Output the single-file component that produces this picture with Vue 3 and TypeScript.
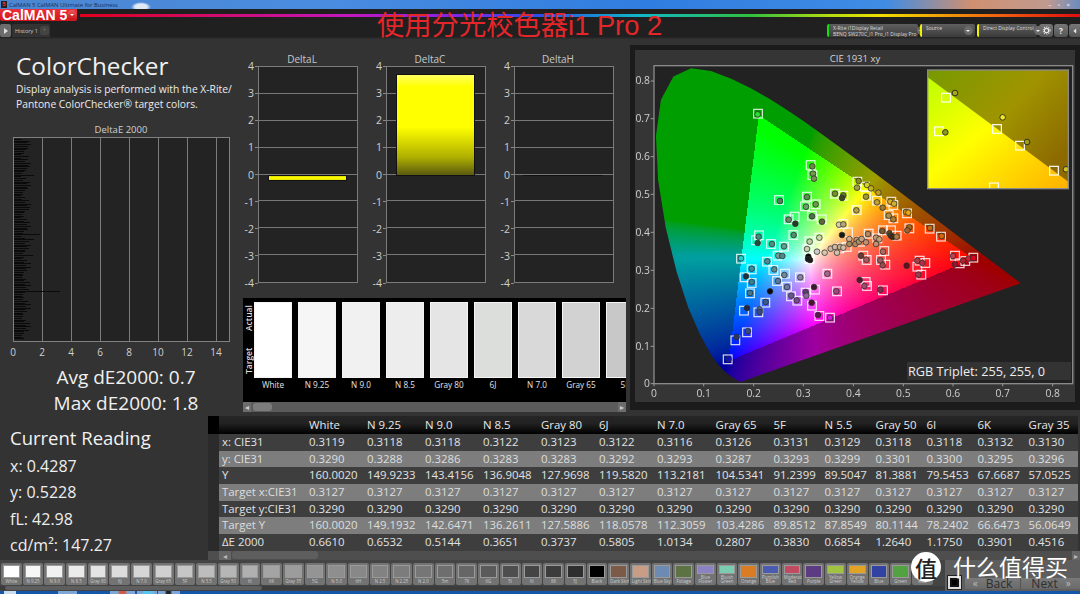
<script setup lang="ts">
import { onMounted, ref } from 'vue'

const canvasEl = ref<HTMLCanvasElement | null>(null)

const locus: number[][] = [[.1741,.005],[.1714,.0051],[.1644,.0109],[.1566,.0177],[.144,.0297],[.1241,.0578],[.1096,.0868],[.0913,.1327],[.0687,.2007],[.0454,.295],[.0235,.4127],[.0082,.5384],[.0039,.6548],[.0139,.7502],[.0389,.812],[.0743,.8338],[.1142,.8262],[.1547,.8059],[.1929,.7816],[.2296,.7543],[.2658,.7243],[.3016,.6923],[.3373,.6589],[.3731,.6245],[.4087,.5896],[.4441,.5547],[.4788,.5202],[.5125,.4866],[.5448,.4544],[.5752,.4242],[.6029,.3965],[.627,.3725],[.6658,.334],[.6915,.3083],[.7079,.292],[.726,.274],[.7347,.2653]]

const toPx = (x: number, y: number) => [(72 + x * 1497.5) / 3, (1016 - y * 1135) / 3]
const fromPx = (px: number, py: number) => [(px * 3 - 72) / 1497.5, (1016 - py * 3) / 1135]

function inTriangle(x: number, y: number) {
  const t = [[.21, .71], [.64, .33], [.15, .06]]
  let sign = 0
  for (let i = 0; i < 3; i++) {
    const a = t[i], b = t[(i + 1) % 3]
    const c = (b[0] - a[0]) * (y - a[1]) - (b[1] - a[1]) * (x - a[0])
    if (c !== 0) {
      if (sign !== 0 && Math.sign(c) !== sign) return false
      sign = Math.sign(c)
    }
  }
  return true
}

function colorAt(x: number, y: number): number[] {
  const Y = 1, X = x / Math.max(y, 0.001), Z = (1 - x - y) / Math.max(y, 0.001)
  let r = 3.2406 * X - 1.5372 * Y - 0.4986 * Z
  let g = -0.9689 * X + 1.8758 * Y + 0.0415 * Z
  let b = 0.0557 * X - 0.204 * Y + 1.057 * Z
  r = Math.max(r, 0); g = Math.max(g, 0); b = Math.max(b, 0)
  const inside = inTriangle(x, y)
  if (!inside && g >= b && g > 0) {
    const t = Math.min(Math.max((b / g - 0.6) / 0.35, 0), 1)
    b = g * t
  }
  const m = Math.max(r, g, b, 0.0001)
  const k = inside ? 1 : 0.62
  const e = inside ? 0.85 : 0.6
  const f = (v: number) => Math.pow(v / m, e) * 255 * k
  return [f(r), f(g), f(b)]
}

onMounted(() => {
  const c = canvasEl.value
  if (!c) return
  const ctx = c.getContext('2d')
  if (!ctx) return
  const off = document.createElement('canvas')
  off.width = 450; off.height = 365
  const oc = off.getContext('2d')
  if (!oc) return
  const img = oc.createImageData(450, 365)
  for (let py = 0; py < 365; py++) {
    for (let px = 0; px < 450; px++) {
      const [x, y] = fromPx(px + 0.5, py + 0.5)
      const col = y > 0 ? colorAt(x, y) : [0, 0, 0]
      const i = (py * 450 + px) * 4
      img.data[i] = col[0]; img.data[i + 1] = col[1]; img.data[i + 2] = col[2]; img.data[i + 3] = 255
    }
  }
  oc.putImageData(img, 0, 0)
  ctx.fillStyle = '#222222'
  ctx.fillRect(24, 21, 419, 318)
  ctx.save()
  ctx.beginPath()
  locus.forEach((p, i) => {
    const [a, b] = toPx(p[0], p[1])
    if (i) ctx.lineTo(a, b)
    else ctx.moveTo(a, b)
  })
  ctx.closePath()
  ctx.clip()
  ctx.drawImage(off, 0, 0)
  ctx.restore()
})

const barValues = Array.from({ length: 118 }, (_, i) => {
  if (i === 89) return 3.15
  const base = 0.55 + 0.4 * Math.abs(Math.sin(i * 1.7)) + 0.25 * Math.sin(i * 0.53)
  const spikes: Record<number, number> = { 21: 1.4, 56: 1.8, 59: 1.4, 68: 1.3, 10: 1.05, 41: 1.0 }
  return spikes[i] ?? base
})

const deltas = [
  { name: 'DeltaL', cls: 'bar-l' },
  { name: 'DeltaC', cls: 'bar-c' },
  { name: 'DeltaH', cls: 'bar-h' },
]
const yLabels = ['4', '3', '2', '1', '0', '-1', '-2', '-3', '-4']

const swatches = [
  ['White', '#ffffff'], ['N 9.25', '#f6f6f6'], ['N 9.0', '#f1f1f2'], ['N 8.5', '#ededed'], ['Gray 80', '#e5e5e5'],
  ['6J', '#dcdedc'], ['N 7.0', '#d8d9d8'], ['Gray 65', '#d2d2d2'], ['5F', '#c8c8c8'],
]

const colNames = ['White', 'N 9.25', 'N 9.0', 'N 8.5', 'Gray 80', '6J', 'N 7.0', 'Gray 65', '5F', 'N 5.5', 'Gray 50', '6I', '6K', 'Gray 35']
const rows: { label: string; light: boolean; v: string[] }[] = [
  { label: 'x: CIE31', light: false, v: ['0.3119','0.3118','0.3118','0.3122','0.3123','0.3122','0.3116','0.3126','0.3131','0.3129','0.3118','0.3118','0.3132','0.3130'] },
  { label: 'y: CIE31', light: true, v: ['0.3290','0.3288','0.3286','0.3283','0.3283','0.3292','0.3293','0.3287','0.3293','0.3299','0.3301','0.3300','0.3295','0.3296'] },
  { label: 'Y', light: false, v: ['160.0020','149.9233','143.4156','136.9048','127.9698','119.5820','113.2181','104.5341','91.2399','89.5047','81.3881','79.5453','67.6687','57.0525'] },
  { label: 'Target x:CIE31', light: true, v: Array(14).fill('0.3127') },
  { label: 'Target y:CIE31', light: false, v: Array(14).fill('0.3290') },
  { label: 'Target Y', light: true, v: ['160.0020','149.1932','142.6471','136.2611','127.5886','118.0578','112.3059','103.4286','89.8512','87.8549','80.1144','78.2402','66.6473','56.0649'] },
  { label: 'ΔE 2000', light: false, v: ['0.6610','0.6532','0.5144','0.3651','0.3737','0.5805','1.0134','0.2807','0.3830','0.6854','1.2640','1.1750','0.3901','0.4516'] },
]

const film = [
  ['White','#ffffff'],['N 9.25','#f6f6f6'],['N 9.0','#f1f1f1'],['N 8.5','#ebebeb'],['Gray 80','#e4e4e4'],['6J','#dcdcdc'],['N 7.0','#d6d6d6'],['Gray 65','#d0d0d0'],['5F','#c6c6c6'],['N 5.5','#bdbdbd'],['Gray 50','#b6b6b6'],['6I','#b0b0b0'],['6K','#a4a4a4'],['Gray 35','#9c9c9c'],['5G','#949494'],['N 5.0','#8e8e8e'],['6H','#888888'],['N 2.5','#828282'],['N 2.25','#7c7c7c'],['N 2.0','#767676'],['5m','#6e6e6e'],['7K','#666666'],['6G','#5a5a5a'],['5I','#4e4e4e'],['6I','#444444'],['8K','#3c3c3c'],['5J','#2e2e2e'],['Black','#000000'],['Dark Skin','#7b5a48'],['Light Skin','#c99d85'],['Blue Sky','#6d8bb2'],['Foliage','#5d7242'],['Blue\nFlower','#8a82c2'],['Bluish\nGreen','#7bcdb2'],['Orange','#d97c24'],['Purplish\nBlue','#4a5bb2'],['Moderate\nRed','#c24b62'],['Purple','#5c3b82'],['Yellow\nGreen','#a2c242'],['Orange\nYellow','#e2a224'],['Blue','#3242a2'],['Green','#52a242'],['Red','#b03030'],
]

const xTicks = [['0',72],['0.1',221],['0.2',371],['0.3',520],['0.4',670],['0.5',820],['0.6',969],['0.7',1118],['0.8',1268]] as [string, number][]
const yTicks = [['0.8',108],['0.7',221],['0.6',335],['0.5',448],['0.4',562],['0.3',676],['0.2',790],['0.1',904],['0',1016]] as [string, number][]

const squares: number[][] = [[384,206],[542,360],[547,390],[447,465],[531,455],[525,484],[557,478],[546,512],[575,523],[476,523],[494,515],[490,570],[387,571],[378,586],[423,597],[462,605],[443,632],[411,650],[333,641],[365,673],[430,675],[344,697],[365,714],[360,745],[465,686],[441,708],[471,725],[510,697],[483,754],[502,767],[406,773],[342,797],[385,802],[351,862],[316,886],[293,943],[527,743],[555,734],[546,782],[568,813],[600,818],[592,686],[621,739],[707,711],[711,723],[759,736],[874,689],[869,647],[886,654],[862,665],[975,632],[989,655],[1006,648],[1030,638],[763,618],[753,645],[766,659],[700,632],[710,645],[532,612],[538,589],[568,578],[628,610],[640,537],[654,562],[716,566],[742,580],[759,556],[783,556],[800,572],[539,642],[682,410],[705,425],[708,452],[741,467],[784,470],[790,480],[680,495],[776,510],[790,520],[615,446],[640,452],[831,505],[838,550],[899,551],[933,575],[650,606],[690,590]]

const circles: [number, number, string][] = [[383,208,'#2fe02f'],[547,364,'#6b8a3c'],[549,386,'#6f9a4a'],[552,401,'#74904a'],[450,468,'#4e7f55'],[531,456,'#5d8f4f'],[528,485,'#6a9f6a'],[557,478,'#6c9a4c'],[546,514,'#4f6f4a'],[576,530,'#5a6a3c'],[476,524,'#6a8a6a'],[496,536,'#2a3a2a'],[491,570,'#4f8f6f'],[386,575,'#3f8f80'],[383,594,'#1f4f3f'],[426,597,'#4f8f80'],[462,604,'#5f9f90'],[445,632,'#6fa09a'],[457,633,'#4f8a85'],[412,649,'#4f8a95'],[333,640,'#20d0d0'],[365,671,'#3f8a9a'],[433,673,'#5f8a95'],[348,694,'#203040'],[365,711,'#3f7f90'],[360,744,'#3f7a90'],[463,690,'#6a8aa0'],[444,708,'#5a7a9a'],[471,726,'#6a7aa0'],[511,697,'#8a80a0'],[484,752,'#6a5a8a'],[500,766,'#7a4a8a'],[420,739,'#0a0a14'],[407,771,'#3a5a8a'],[351,789,'#202840'],[389,793,'#4a6aa0'],[389,801,'#3a4a80'],[354,858,'#3a4a7a'],[320,876,'#2a3560'],[296,942,'#1010c0'],[527,741,'#5a4070'],[529,752,'#8a6a9a'],[552,726,'#3a1a30'],[545,773,'#4a1530'],[564,810,'#5a1a50'],[600,818,'#e010e0'],[592,686,'#a06a90'],[619,739,'#a04a80'],[689,705,'#501a30'],[703,723,'#a04a70'],[751,734,'#8a2a50'],[830,662,'#601020'],[865,689,'#a03a50'],[862,647,'#a84050'],[877,654,'#b03040'],[969,633,'#c04050'],[975,658,'#901530'],[999,647,'#b02030'],[1016,641,'#d02030'],[1030,639,'#e00020'],[759,620,'#b06a60'],[751,646,'#a05a60'],[758,661,'#9a4a50'],[693,632,'#6a3a30'],[709,644,'#b05a60'],[531,612,'#cad0b0'],[539,590,'#c0d0a0'],[568,578,'#d0d8b0'],[561,620,'#cccccc'],[584,623,'#d8c8b0'],[602,611,'#d0b8a0'],[621,623,'#d8c0a8'],[615,606,'#d0b8a0'],[630,606,'#c8b090'],[640,608,'#d0b8a0'],[627,539,'#d8d0a0'],[640,538,'#b0a878'],[636,570,'#1a1a10'],[658,582,'#d0b090'],[658,597,'#a08a60'],[680,585,'#c09a70'],[676,597,'#a88a60'],[687,590,'#b09068'],[695,582,'#c8a080'],[708,592,'#c09070'],[714,567,'#b08a60'],[738,578,'#c09a70'],[748,583,'#c8a078'],[738,597,'#c0906a'],[757,558,'#7a5a30'],[778,565,'#5a4a20'],[783,572,'#4a3a18'],[788,576,'#3a2a10'],[800,575,'#b07a40'],[535,635,'#000000'],[540,645,'#111111'],[534,642,'#1a1a1a'],[686,408,'#8a8a20'],[681,428,'#a0a040'],[711,420,'#d8d020'],[723,430,'#c0b020'],[745,443,'#c0a020'],[708,455,'#a09830'],[741,472,'#c0a030'],[758,488,'#a07a30'],[781,470,'#d8b020'],[792,476,'#d0b030'],[679,496,'#b0a040'],[776,512,'#b09040'],[790,523,'#a88030'],[615,446,'#7a8a30'],[640,451,'#6a7a30'],[636,459,'#3a4a20'],[828,501,'#d09010'],[835,503,'#e8a810'],[838,547,'#a06a20'],[832,556,'#a0602a'],[900,549,'#c86a10'],[935,573,'#d06a10']]

const insetSquares: number[][] = [[948,158],[1101,252],[927,259],[1170,302],[1272,377],[1092,427]]
const insetCircles: [number, number, string][] = [[975,144,'#a8a818'],[1118,217,'#f0e820'],[946,262,'#8a9a20'],[1191,291,'#a0a010'],[1308,373,'#d0c020']]
</script>

<template>
  <div class="app">
    <div class="titlebar">
      <span class="sys-icon">5</span>
      <span class="title-text">CalMAN 5 CalMAN Ultimate for Business</span>
      <span class="glow"></span>
      <span class="winbtns">– ▫ ×</span>
    </div>
    <div class="toolbar">
      <div class="logo"><span>CalMAN 5</span><i class="logo-arrow"></i></div>
      <div class="rainbow"></div>
    </div>
    <div class="tabs">
      <span class="play"><i></i></span>
      <span class="tab">History 1<b>+</b></span>
      <span class="spring"></span>
      <span class="device green"><em>X-Rite i1Display Retail<br />BENQ SW270C_i1 Pro_i1 Display Pro</em><i></i></span>
      <span class="device source"><em>Source</em><i></i></span>
      <span class="device direct"><em>Direct Display Control</em><i></i></span>
      <span class="roundbtn">
        <svg viewBox="0 0 10 10" width="9" height="9"><circle cx="5" cy="5" r="2.4" fill="none" stroke="#e8e8e8" stroke-width="1.3" /><circle cx="5" cy="5" r="3.9" fill="none" stroke="#e8e8e8" stroke-width="1.2" stroke-dasharray="1.3 1.2" /></svg>
      </span>
      <span class="roundbtn">?</span>
      <span class="roundbtn last">
        <svg viewBox="0 0 10 10" width="8" height="8"><path d="M6.5 2 L3 5 L6.5 8 Z" fill="#e8e8e8" /></svg>
      </span>
    </div>

    <div class="top-row">
      <section class="left">
        <h1>ColorChecker</h1>
        <p class="desc">Display analysis is performed with the X-Rite/<br />Pantone ColorChecker® target colors.</p>
        <div class="de-title">DeltaE 2000</div>
        <div class="de-chart">
          <div class="de-bars">
            <i v-for="(v, i) in barValues" :key="i" :style="{ width: v * 14.5 + 'px' }"></i>
          </div>
        </div>
        <div class="de-axis">
          <span v-for="n in [0, 2, 4, 6, 8, 10, 12, 14]" :key="n">{{ n }}</span>
        </div>
        <div class="stat">Avg dE2000: 0.7</div>
        <div class="stat max">Max dE2000: 1.8</div>
      </section>

      <section class="middle">
        <div class="deltas">
          <div v-for="d in deltas" :key="d.name" class="delta">
            <div class="delta-title" :class="{ wide: d.name === 'DeltaL' }">{{ d.name }}</div>
            <div class="delta-body">
              <div class="delta-axis"><span v-for="l in yLabels" :key="l">{{ l }}</span></div>
              <div class="delta-plot">
                <i v-for="n in 8" :key="n" class="gridline"></i>
                <b class="bar" :class="d.cls"></b>
              </div>
            </div>
          </div>
        </div>
        <div class="swatch-panel">
          <div class="swatch-main">
            <span class="rot actual">Actual</span>
            <span class="rot target">Target</span>
            <div class="swatch-row">
              <div v-for="s in swatches" :key="s[0]" class="swatch">
                <div class="patch" :style="{ background: s[1] }"></div>
                <span>{{ s[0] }}</span>
              </div>
            </div>
          </div>
          <div class="hscroll"><i class="sl">◂</i><b></b><i class="sr">▸</i></div>
        </div>
      </section>

      <section class="cie-col">
        <div class="cie">
          <div class="cie-inner"><div class="cie-title">CIE 1931 xy</div></div>
          <canvas ref="canvasEl" class="cie-canvas" width="450" height="365"></canvas>
          <svg class="cie-svg" viewBox="0 0 1350 1095" width="450" height="365">
            <defs>
              <linearGradient id="inLow" x1="0" y1="0" x2="1" y2="1">
                <stop offset="0" stop-color="#b8ff00" />
                <stop offset="0.45" stop-color="#ffff00" />
                <stop offset="1" stop-color="#ffb000" />
              </linearGradient>
              <linearGradient id="inHigh" x1="0" y1="0" x2="1" y2="0.7">
                <stop offset="0" stop-color="#789a00" />
                <stop offset="0.55" stop-color="#a09400" />
                <stop offset="1" stop-color="#8c6a00" />
              </linearGradient>
            </defs>
            <rect x="72" y="62" width="1256" height="954" fill="none" stroke="#8a8a8a" stroke-width="4" />
            <g v-for="t in xTicks" :key="'x' + t[0]">
              <line :x1="t[1]" y1="1016" :x2="t[1]" y2="1024" stroke="#999" stroke-width="3" />
              <text :x="t[1]" y="1057" text-anchor="middle" class="tick">{{ t[0] }}</text>
            </g>
            <g v-for="t in yTicks" :key="'y' + t[0]">
              <line x1="62" :y1="t[1]" x2="72" :y2="t[1]" stroke="#999" stroke-width="3" />
              <text x="60" :y="t[1] + 10" text-anchor="end" class="tick">{{ t[0] }}</text>
            </g>
            <rect v-for="(s, i) in squares" :key="'s' + i" :x="s[0] - 13" :y="s[1] - 13" width="26" height="26" fill="none" stroke="#ffffff" stroke-opacity="0.85" stroke-width="3.5" />
            <circle v-for="(c, i) in circles" :key="'c' + i" :cx="c[0]" :cy="c[1]" r="8.5" :fill="c[2]" stroke="#2a2a2a" stroke-width="2.2" />

            <svg x="893" y="75" width="422" height="356" viewBox="893 75 422 356">
              <rect x="893" y="75" width="422" height="356" fill="url(#inLow)" />
              <polygon points="893,75 1315,75 1315,410 893,97" fill="url(#inHigh)" />
              <rect v-for="(s, i) in insetSquares" :key="'is' + i" :x="s[0] - 13" :y="s[1] - 13" width="26" height="26" fill="none" stroke="#ffffff" stroke-width="3.5" />
              <circle v-for="(c, i) in insetCircles" :key="'ic' + i" :cx="c[0]" :cy="c[1]" r="8.5" :fill="c[2]" stroke="#222" stroke-width="2.6" />
            </svg>
            <rect x="893" y="75" width="422" height="356" fill="none" stroke="#8a8a8a" stroke-width="4" />
          </svg>
          <div class="triplet">RGB Triplet: 255, 255, 0</div>
        </div>
      </section>
    </div>

    <div class="bottom-row">
      <section class="reading">
        <h2>Current Reading</h2>
        <div>x: 0.4287</div>
        <div>y: 0.5228</div>
        <div>fL: 42.98</div>
        <div>cd/m²: 147.27</div>
      </section>
      <section class="table-wrap">
        <div class="trow thead">
          <span class="gut"></span><span class="lab"></span>
          <span v-for="(c, i) in colNames" :key="i">{{ c }}</span>
        </div>
        <div v-for="r in rows" :key="r.label" class="trow" :class="{ light: r.light }">
          <span class="gut"></span><span class="lab">{{ r.label }}</span>
          <span v-for="(c, i) in r.v" :key="i">{{ c }}</span>
        </div>
        <div class="tscroll"><i>◂</i><b></b><i class="end">▸</i></div>
      </section>
    </div>

    <div class="filmbar">
      <div class="film-left">
        <div class="film">
          <div v-for="(f, i) in film" :key="i" class="film-item">
            <i :style="{ background: f[1] }"></i>
            <span>{{ f[0] }}</span>
          </div>
        </div>
        <div class="film-scroll"><b></b></div>
      </div>
      <div class="film-right">
        <span class="stop"><i></i></span>
        <span class="navbtn"><i>«</i>Back</span>
        <span class="navbtn next">Next<i>»</i></span>
      </div>
    </div>
    <div class="taskbar">
      <i class="t1"></i><i class="t2"></i><i class="t3"></i><i class="t4"></i><i class="t5"></i>
    </div>

    <div class="overlay-title">使用分光校色器i1 Pro 2</div>
    <div class="watermark">
      <span class="wm-logo">值</span>
      <span class="wm-text">什么值得买</span>
    </div>
  </div>
</template>

<style>
html, body { margin: 0; background: #333; }
</style>

<style scoped>
.app {
  position: relative;
  width: 1080px;
  height: 594px;
  overflow: hidden;
  display: flex;
  flex-direction: column;
  background: #333333;
  color: #e8e8e8;
  font-family: "Open Sans", "Noto Sans", sans-serif;
}
.titlebar {
  height: 9px;
  flex: none;
  display: flex;
  align-items: center;
  gap: 2px;
  background:
    radial-gradient(ellipse 10px 5px at 141px 7px, #dfe8f4 0, #dfe8f4 60%, transparent 100%),
    linear-gradient(90deg, #4c86d0 0%, #4a8ce0 30%, #2f7de0 60%, #3f8ce4 82%, #d09070 90%, #c09a90 97%, #6a8cc0 100%);
  overflow: hidden;
}
.sys-icon { width: 6px; height: 7px; margin-left: 1px; background: #222; color: #e33; font-size: 6px; line-height: 7px; text-align: center; font-weight: 700; }
.title-text { font-size: 5.8px; color: #13305c; line-height: 8px; white-space: nowrap; }
.glow { flex: 1; }
.winbtns { font-size: 6px; line-height: 8px; color: #fff; margin-right: 10px; word-spacing: 5px; }
.toolbar {
  height: 12px;
  flex: none;
  display: flex;
  align-items: center;
  background: #1f1f1f;
}
.logo {
  width: 77px;
  height: 12px;
  flex: none;
  display: flex;
  align-items: center;
  justify-content: space-between;
  padding: 0 4px 0 2px;
  box-sizing: border-box;
  background: linear-gradient(#ea3038, #d5141c);
  border-radius: 0 0 2px 2px;
  font: 700 14px/12px "Liberation Sans", sans-serif;
  white-space: nowrap;
  color: #fff;
}
.logo-arrow {
  flex: none;
  width: 10px; height: 10px; border-radius: 50%;
  background: linear-gradient(#f0565c, #c3141b);
  position: relative;
}
.logo-arrow::after {
  content: ""; position: absolute; left: 2.5px; top: 4px;
  border: 2.5px solid transparent; border-top-color: #fff; border-bottom: 0;
}
.rainbow {
  flex: 1;
  height: 3px;
  margin-left: 3px;
  background: linear-gradient(90deg, #e0001c 0%, #c218c0 27%, #7a28e8 38%, #2a50e8 46%, #10b8c8 56%, #30c040 67%, #b4dc10 75%, #f0e000 80%, #f06010 92%, #e00c10 100%);
}
.tabs {
  height: 16px;
  flex: none;
  box-sizing: border-box;
  padding-top: 3px;
  display: flex;
  align-items: stretch;
  background: #202020;
}
.play { width: 11px; background: #6c6c6c; border-radius: 2px; display: flex; align-items: center; justify-content: center; }
.play i { border-left: 4px solid #ddd; border-top: 3px solid transparent; border-bottom: 3px solid transparent; }
.tab {
  margin-left: 1px;
  width: 38px;
  padding-left: 3px;
  box-sizing: border-box;
  display: flex;
  align-items: center;
  justify-content: space-between;
  background: #333;
  border-radius: 2px 2px 0 0;
  font-size: 5.5px;
  color: #ccc;
}
.tab b { width: 9px; height: 9px; background: #444; border-radius: 2px; text-align: center; line-height: 9px; color: #777; font-weight: 400; margin-right: 1px; }
.spring { flex: 1; }
.device {
  position: relative;
  box-sizing: border-box;
  margin-right: 2px;
  padding-left: 4px;
  border-radius: 2px;
  background: linear-gradient(#5f5f5f, #3b3b3b);
  font-size: 5px;
  line-height: 6px;
  color: #ddd;
  display: flex;
  align-items: flex-start;
  justify-content: space-between;
}
.device em { font-style: normal; white-space: nowrap; padding-top: 1px; }
.device i {
  flex: none; width: 9px; height: 9px; margin: 2px 2px 0 0; border-radius: 50%; background: #6a6a6a; position: relative;
}
.device i::after {
  content: ""; position: absolute; left: 2px; top: 3.5px;
  border: 2.5px solid transparent; border-top-color: #eee; border-bottom: 0;
}
.device.green { width: 91px; border-left: 2px solid #10e010; }
.device.source { width: 55px; border-left: 2px solid #f0f000; }
.device.direct { width: 60px; border-left: 2px solid #f0f000; }
.roundbtn {
  width: 14px; margin-right: 1px; border-radius: 3px;
  background: linear-gradient(#777, #555);
  font-size: 8px; line-height: 13px; text-align: center; color: #eee; font-weight: 700;
  display: flex; align-items: center; justify-content: center;
}
.roundbtn.last { width: 11px; margin-right: 0; border-radius: 3px 0 0 3px; }

.top-row {
  height: 378px;
  flex: none;
  display: grid;
  grid-template-columns: 240px 390px 450px;
  background: linear-gradient(#262626 0, #262626 1px, #333 2px);
}
.left { padding-top: 14px; }
.left h1 { margin: 0 0 1px 16px; font-size: 24.3px; font-weight: 400; line-height: 30px; color: #f0f0f0; }
.desc { margin: 0 0 0 16px; font-size: 10.3px; line-height: 15px; color: #ececec; white-space: nowrap; }
.de-title { margin: 11px 0 0 12px; width: 218px; font-size: 9.5px; line-height: 14px; text-align: center; color: #d0d0d0; }
.de-chart {
  margin-left: 13px;
  width: 217px;
  height: 205px;
  box-sizing: border-box;
  border: 1px solid #808080;
  background-color: #232323;
  background-image: repeating-linear-gradient(90deg, transparent 0, transparent 28px, #7c7c7c 28px, #7c7c7c 29px);
  overflow: hidden;
}
.de-bars { display: flex; flex-direction: column; height: 100%; justify-content: space-between; padding: 1px 0; box-sizing: border-box; }
.de-bars i { display: block; height: 1px; background: #0a0a0a; }
.de-axis { margin: 3px 0 0 13px; width: 203px; height: 14px; display: flex; justify-content: space-between; font-size: 10px; line-height: 14px; color: #cfcfcf; }
.de-axis span { width: 0; display: flex; justify-content: center; }
.stat { width: 252px; line-height: 26px; height: 25px; margin-top: 5px; text-align: center; font-size: 19px; color: #f0f0f0; white-space: nowrap; }
.stat.max { margin-top: 1px; }

.middle { display: flex; flex-direction: column; }
.deltas { display: flex; gap: 10px; padding-top: 16px; }
.delta { width: 118px; }
.delta-title { margin-left: 18px; width: 88px; height: 13px; font-size: 10px; line-height: 13px; text-align: center; color: #c8c8c8; }
.delta-title.wide { width: 88px; }
.delta-title:not(.wide) { width: 88px; margin-left: 18px; }
.delta-body { display: flex; }
.delta-axis {
  width: 18px;
  height: 229px;
  margin-top: -6px;
  display: flex;
  flex-direction: column;
  justify-content: space-between;
  align-items: flex-end;
  box-sizing: border-box;
  font-size: 10.5px;
  line-height: 12px;
  color: #cfcfcf;
}
.delta-axis span { display: flex; align-items: center; gap: 1px; }
.delta-axis span::after { content: ""; display: block; width: 3px; height: 1px; background: #8a8a8a; }
.delta-plot {
  position: relative;
  width: 100px;
  height: 217px;
  box-sizing: border-box;
  border: 1px solid #7c7c7c;
  background: #232323;
  display: grid;
  grid-template-rows: repeat(8, 1fr);
}
.gridline { display: block; box-sizing: border-box; border-bottom: 1px solid #777777; }
.gridline:nth-child(8) { border-bottom: 0; }
.bar { position: absolute; box-sizing: border-box; border: 1px solid #111; }
.bar-l { left: 9px; width: 79px; top: 108px; height: 6px; background: linear-gradient(#d8d800, #ffff00 45%, #e4e400); }
.bar-c { left: 9px; width: 79px; top: 7px; height: 102px; background: linear-gradient(#ffff60, #ffff00 12%, #ffff00 52%, #b0b000 82%, #5a5a10); }
.bar-h { left: 8px; width: 80px; top: 108px; height: 1px; border: 0; background: #111; }

.swatch-panel { margin: 9px 0 0 3px; width: 383px; height: 114px; }
.swatch-main { position: relative; height: 104px; background: #000; overflow: hidden; padding-top: 4px; box-sizing: border-box; }
.rot { position: absolute; left: -6px; width: 24px; text-align: center; transform: rotate(-90deg); font-size: 8.5px; line-height: 10px; color: #ddd; font-weight: 600; }
.rot.actual { top: 16px; }
.rot.target { top: 59px; }
.swatch-row { display: flex; gap: 6px; margin-left: 11px; width: 420px; }
.swatch { width: 38px; flex: none; display: flex; flex-direction: column; align-items: center; }
.patch { width: 38px; height: 76px; box-sizing: border-box; border: 1px solid #f4f4f4; }
.swatch span { font-size: 8.2px; line-height: 14px; color: #e4e4e4; white-space: nowrap; }
.hscroll { height: 10px; display: flex; align-items: center; background: #5b5b5b; }
.hscroll i { font-style: normal; font-size: 8px; width: 8px; line-height: 10px; text-align: center; color: #ccc; background: #6c6c6c; }
.hscroll b { width: 19px; height: 8px; margin-left: 2px; background: #7c7c7c; border-radius: 3px; }
.hscroll .sr { margin-left: auto; }

.cie-col { padding-top: 8px; }
.cie { position: relative; width: 450px; height: 365px; padding: 5px; box-sizing: border-box; background: #1b1b1b; }
.cie-inner { height: 352px; background: #353535; }
.cie-title { padding-top: 2px; font-size: 9.5px; line-height: 13px; text-align: center; color: #d4d4d4; }
.cie-canvas, .cie-svg { position: absolute; left: 0; top: 0; }
.tick { fill: #cfcfcf; font-size: 31px; font-family: "Open Sans", sans-serif; }
.triplet {
  position: absolute;
  left: 277px; top: 317px;
  width: 164px; height: 18px;
  padding-left: 1px;
  box-sizing: border-box;
  background: #333;
  font-size: 12.7px;
  line-height: 18px;
  color: #ededed;
  white-space: nowrap;
}

.bottom-row { height: 145px; flex: none; display: flex; }
.reading { width: 208px; flex: none; padding: 10px 0 0 10px; box-sizing: border-box; font-size: 16px; line-height: 26.3px; color: #eee; }
.reading h2 { margin: 0 0 2px; font-size: 18.5px; font-weight: 400; line-height: 26px; color: #f2f2f2; }
.table-wrap { flex: 1; padding-top: 1px; min-width: 0; }
.trow {
  display: grid;
  grid-template-columns: 11px 90px repeat(6, 58px) 58.6px 58px 51px 51px 51px 51px 51px 1fr;
  height: 16.7px;
  align-items: center;
  background: #3e3e3e;
  margin-right: 2px;
  font-size: 11.4px;
  line-height: 16.7px;
  color: #e2e2e2;
  white-space: nowrap;
}
.trow.light { background: #7d7d7d; color: #dedede; }
.trow span { min-width: 0; }
.thead { height: 18px; background: linear-gradient(#262626, #222 40%, #000); font-weight: 500; color: #e8e8e8; }
.gut { height: 100%; background: #2b2b2b; }
.thead .gut { background: #000; }
.lab { padding-left: 3px; }
.tscroll { height: 9px; margin-top: 0; display: flex; align-items: flex-start; background: #4e4e4e; }
.tscroll i { font-style: normal; width: 12px; margin-left: 11px; font-size: 8px; line-height: 9px; text-align: center; color: #bbb; background: #666; }
.tscroll i.end { width: 8px; margin-left: auto; margin-right: 0; }
.tscroll b { width: 86px; height: 8px; margin-left: 1px; background: #5e5e5e; border-radius: 3px; }

.filmbar { height: 31px; flex: none; display: flex; background: #444; }
.film-left { width: 945px; flex: none; display: flex; flex-direction: column; overflow: hidden; padding-top: 3px; box-sizing: border-box; }
.film { display: flex; height: 22px; padding-left: 1px; }
.film-item {
  width: 20.7px; margin-right: 1px; flex: none;
  box-sizing: border-box;
  padding: 2px 2px 0;
  display: flex; flex-direction: column; align-items: stretch;
  background: #737373;
  border-radius: 2px;
  overflow: hidden;
}
.film-item i { flex: 1; min-height: 4px; display: block; border: 1px solid #9a9a9a; box-sizing: border-box; }
.film-item span { font-size: 4.4px; line-height: 4.6px; text-align: center; color: #cccccc; padding: 1px 0 1px; white-space: pre; }
.film-scroll { height: 4px; margin-top: 1px; background: #3c3c3c; padding-left: 5px; }
.film-scroll b { display: block; width: 257px; height: 4px; background: #5e5e5e; border-radius: 2px; }
.film-right { flex: 1; display: flex; align-items: flex-end; padding-bottom: 2px; background: #5e5e5e; gap: 0; position: relative; }
.stop { width: 13px; height: 13px; margin: 0 4px 0 3px; box-sizing: border-box; border: 2px solid #ddd; background: #111; outline: 1px solid #222; display: flex; align-items: center; justify-content: center; }
.stop i { width: 5px; height: 5px; background: #000; }
.navbtn { width: 55px; height: 11px; display: flex; align-items: center; justify-content: center; gap: 8px; background: linear-gradient(#7a7a7a, #6a6a6a); font-size: 12px; line-height: 11px; color: #2e2e2e; }
.navbtn.next { width: 60px; border-left: 1px solid #555; }
.navbtn i { font-style: normal; color: #bbb; font-size: 10px; }
.taskbar { height: 3px; flex: none; display: flex; background: #1656a8; }
.taskbar i { display: block; height: 3px; }
.t1 { width: 12px; margin-left: 4px; background: #c8dcf0; }
.t2 { width: 19px; margin-left: 42px; background: #7ea6d4; }
.t3 { width: 25px; margin-left: 33px; background: linear-gradient(90deg, #7ea6d4 30%, #d05a48 40%, #d05a48 60%, #7ea6d4 70%); }
.t4 { width: 20px; margin-left: 2px; background: linear-gradient(90deg, #7ea6d4 25%, #58c4f0 35%, #58c4f0 75%, #7ea6d4 85%); }
.t5 { width: 22px; margin-left: 1px; background: linear-gradient(90deg, #7ea6d4 30%, #222 40%, #222 55%, #7ea6d4 65%); }

.overlay-title {
  position: absolute;
  left: 377px;
  top: 10px;
  font-family: "Liberation Sans", "Noto Sans CJK SC", sans-serif;
  font-size: 27.3px;
  line-height: 32px;
  color: #e4262a;
  white-space: nowrap;
}
.watermark { position: absolute; left: 911px; top: 552px; display: flex; align-items: center; gap: 12px; }
.wm-logo {
  width: 30px; height: 30px; border-radius: 50%;
  background: #fff; color: #222;
  font: 500 22px/30px "Noto Sans CJK SC", sans-serif;
  text-align: center;
}
.wm-text {
  font: 400 23px/30px "Noto Sans CJK SC", sans-serif;
  color: #fff;
  white-space: nowrap;
  margin-top: -2px;
}
</style>
